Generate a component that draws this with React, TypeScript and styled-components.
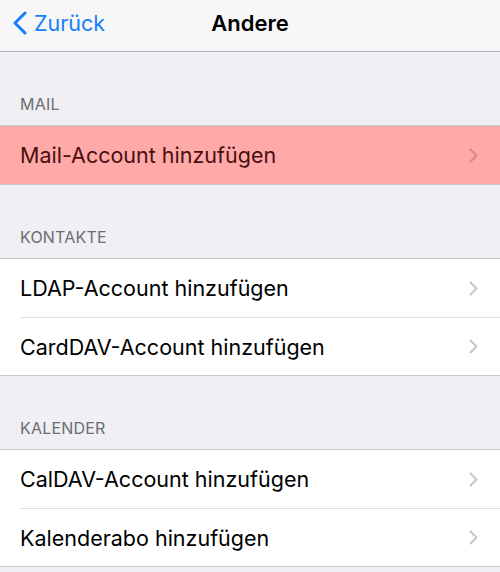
import React from "react";
import styled, { createGlobalStyle } from "styled-components";

const Global = createGlobalStyle`
  html, body { margin: 0; padding: 0; }
  body {
    background: #efeff4;
    font-family: "Inter", "Liberation Sans", sans-serif;
    -webkit-font-smoothing: antialiased;
  }
`;

const Page = styled.div`
  width: 500px;
  height: 572px;
  overflow: hidden;
  background: #efeff4;
  display: flex;
  flex-direction: column;
`;

const NavBar = styled.header`
  height: 52px;
  flex: none;
  box-sizing: border-box;
  background: #f7f7f8;
  border-bottom: 1px solid #b2b2b6;
  display: grid;
  grid-template-columns: 1fr auto 1fr;
  align-items: center;
  padding-bottom: 6px;
`;

const BackButton = styled.div`
  display: flex;
  align-items: center;
  gap: 7px;
  padding-left: 12px;
  color: #157efb;
  font-size: 21.5px;
`;

const Title = styled.div`
  font-weight: 600;
  font-size: 22px;
  color: #000;
`;

const Section = styled.section`
  display: flex;
  flex-direction: column;
  flex: none;
`;

const SectionHeader = styled.div`
  height: 73px;
  box-sizing: border-box;
  display: flex;
  align-items: flex-end;
  padding: 0 20px 11px;
  font-size: 16px;
  color: #6d6d72;
  letter-spacing: 0.2px;
`;

const Group = styled.div`
  background: #fff;
  border-top: 1px solid #c8c7cc;
  border-bottom: 1px solid #c8c7cc;
`;

const Row = styled.div<{ $highlight?: boolean }>`
  height: 58px;
  display: flex;
  align-items: center;
  padding-left: 20px;
  background: ${(p) => (p.$highlight ? "#ffa9a9" : "#fff")};
  & + & > div {
    border-top: 1px solid #e0e0e3;
  }
`;

const RowInner = styled.div<{ $highlight?: boolean }>`
  flex: 1;
  height: 100%;
  box-sizing: border-box;
  display: flex;
  align-items: center;
  justify-content: space-between;
  padding-right: 22px;
  font-size: 21.5px;
  color: ${(p) => (p.$highlight ? "#4a0f0f" : "#000")};
`;

const Chevron = ({ color }: { color: string }) => (
  <svg width="9" height="15" viewBox="0 0 9 15" fill="none">
    <path d="M1.5 1.5L7.5 7.5L1.5 13.5" stroke={color} strokeWidth="2" strokeLinecap="round" strokeLinejoin="round" />
  </svg>
);

const BackChevron = () => (
  <svg width="15" height="24" viewBox="0 0 15 24" fill="none">
    <path d="M13 2L3 12L13 22" stroke="#157efb" strokeWidth="3" strokeLinecap="round" strokeLinejoin="round" />
  </svg>
);

type Item = { label: string; highlight?: boolean };
const sections: { title: string; items: Item[] }[] = [
  { title: "MAIL", items: [{ label: "Mail-Account hinzufügen", highlight: true }] },
  { title: "KONTAKTE", items: [{ label: "LDAP-Account hinzufügen" }, { label: "CardDAV-Account hinzufügen" }] },
  { title: "KALENDER", items: [{ label: "CalDAV-Account hinzufügen" }, { label: "Kalenderabo hinzufügen" }] },
];

export default function App() {
  return (
    <Page>
      <Global />
      <NavBar>
        <BackButton>
          <BackChevron />
          Zurück
        </BackButton>
        <Title>Andere</Title>
        <div />
      </NavBar>
      {sections.map((s) => (
        <Section key={s.title}>
          <SectionHeader>{s.title}</SectionHeader>
          <Group>
            {s.items.map((it) => (
              <Row key={it.label} $highlight={it.highlight}>
                <RowInner $highlight={it.highlight}>
                  {it.label}
                  <Chevron color={it.highlight ? "#d08a8a" : "#c7c7cc"} />
                </RowInner>
              </Row>
            ))}
          </Group>
        </Section>
      ))}
    </Page>
  );
}
